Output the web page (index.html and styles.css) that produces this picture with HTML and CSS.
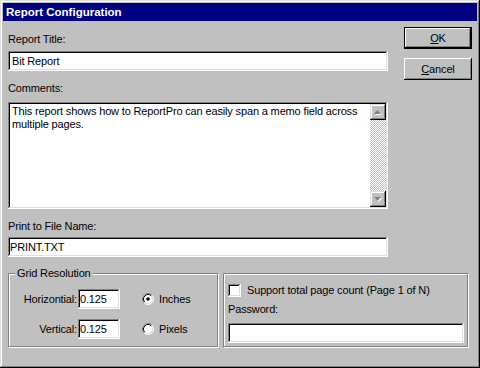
FILE: index.html
```html
<!DOCTYPE html>
<html lang="en">
<head>
    <meta charset="UTF-8">
    <meta name="viewport" content="width=device-width, initial-scale=1.0">
    <title>Report Configuration</title>
    <link rel="stylesheet" href="styles.css">
</head>
<body>
    <div class="dialog">
        <div class="titlebar">Report Configuration</div>

        <div class="dialog-body">
            <!-- Main fields -->
            <div class="main">
                <label class="field-label label-first" for="title">Report Title:</label>
                <input class="field field-title" id="title" type="text" value="Bit Report">

                <label class="field-label label-gap label-comments">Comments:</label>
                <div class="memo">
                    <div class="memo-text">This report shows how to ReportPro can easily span a memo field across multiple pages.</div>
                    <div class="scrollbar">
                        <span class="scroll-btn">
                            <svg width="16" height="16" viewBox="0 0 16 16">
                                <path d="M5 11h7l-3.5-4z" fill="#fff"/>
                                <path d="M4 10h7l-3.5-4z" fill="#808080"/>
                            </svg>
                        </span>
                        <span class="scroll-track"></span>
                        <span class="scroll-btn">
                            <svg width="16" height="16" viewBox="0 0 16 16">
                                <path d="M5 7h7l-3.5 4z" fill="#fff"/>
                                <path d="M4 6h7l-3.5 4z" fill="#808080"/>
                            </svg>
                        </span>
                    </div>
                </div>

                <label class="field-label label-gap label-file" for="file">Print to File Name:</label>
                <input class="field field-file" id="file" type="text" value="PRINT.TXT">
            </div>

            <!-- Dialog buttons -->
            <div class="buttons">
                <button class="btn btn-default"><u>O</u>K</button>
                <button class="btn"><u>C</u>ancel</button>
            </div>

            <!-- Bottom groups -->
            <div class="groups">
                <fieldset class="group group-grid">
                    <legend>Grid Resolution</legend>
                    <div class="grid-rows">
                        <span class="row-label">Horizontial:</span>
                        <input class="field field-small" type="text" value="0.125">
                        <span class="radio">
                            <svg width="12" height="12" viewBox="0 0 12 12">
                                <circle cx="6" cy="6" r="5" fill="#fff"/>
                                <path d="M2.11 9.89A5.5 5.5 0 0 1 9.89 2.11" fill="none" stroke="#808080"/>
                                <path d="M9.89 2.11A5.5 5.5 0 0 1 2.11 9.89" fill="none" stroke="#fff"/>
                                <path d="M2.82 9.18A4.5 4.5 0 0 1 9.18 2.82" fill="none" stroke="#000"/>
                                <path d="M9.18 2.82A4.5 4.5 0 0 1 2.82 9.18" fill="none" stroke="#dfdfdf"/>
                                <circle cx="6" cy="6" r="1.8" fill="#000"/>
                            </svg>
                            Inches
                        </span>

                        <span class="row-label">Vertical:</span>
                        <input class="field field-small" type="text" value="0.125">
                        <span class="radio">
                            <svg width="12" height="12" viewBox="0 0 12 12">
                                <circle cx="6" cy="6" r="5" fill="#fff"/>
                                <path d="M2.11 9.89A5.5 5.5 0 0 1 9.89 2.11" fill="none" stroke="#808080"/>
                                <path d="M9.89 2.11A5.5 5.5 0 0 1 2.11 9.89" fill="none" stroke="#fff"/>
                                <path d="M2.82 9.18A4.5 4.5 0 0 1 9.18 2.82" fill="none" stroke="#000"/>
                                <path d="M9.18 2.82A4.5 4.5 0 0 1 2.82 9.18" fill="none" stroke="#dfdfdf"/>
                            </svg>
                            Pixels
                        </span>
                    </div>
                </fieldset>

                <fieldset class="group group-options">
                    <div class="check-row"><span class="checkbox"></span>Support total page count (Page 1 of N)</div>
                    <label class="field-label label-password" for="password">Password:</label>
                    <input class="field field-password" id="password" type="text" value="">
                </fieldset>
            </div>
        </div>
    </div>
</body>
</html>
```

FILE: styles.css
```css
body {
    margin: 0;
    background-color: #c0c0c0;
    font-family: "Liberation Sans", Arial, sans-serif;
    font-size: 11px;
    letter-spacing: -0.15px;
    color: #000;
}

.dialog {
    width: 480px;
    height: 368px;
    box-sizing: border-box;
    padding: 3px;
    background-color: #c0c0c0;
    box-shadow: inset -1px -1px #000, inset 1px 1px #dfdfdf,
                inset -2px -2px #808080, inset 2px 2px #fff;
}

.titlebar {
    height: 18px;
    line-height: 18px;
    padding-left: 3px;
    background-color: #000080;
    color: #fff;
    font-weight: bold;
    font-size: 11.5px;
    letter-spacing: 0;
}

.dialog-body {
    display: grid;
    grid-template-columns: 380px 68px;
    column-gap: 16px;
    padding: 6px 5px 0;
}

/* Labels and sunken fields */
.field-label {
    display: block;
    line-height: 13px;
}

.label-first {
    margin-top: 6px;
    margin-bottom: 5px;
}

.label-gap {
    margin-top: 11px;
}

.label-comments {
    margin-bottom: 7px;
}

.label-file {
    margin-bottom: 4px;
}

.field,
.memo,
.checkbox {
    background-color: #fff;
    box-shadow: inset -1px -1px #fff, inset 1px 1px #808080,
                inset -2px -2px #dfdfdf, inset 2px 2px #000;
}

.field {
    display: block;
    box-sizing: border-box;
    height: 20px;
    margin: 0;
    border: none;
    outline: none;
    padding: 0 2px;
    font: inherit;
    letter-spacing: inherit;
    color: #000;
}

.field-title {
    width: 380px;
    padding-left: 4px;
}

.field-file {
    width: 380px;
}

.field-small {
    width: 42px;
}

.field-password {
    width: 236px;
}

/* Memo with fake scrollbar */
.memo {
    display: flex;
    height: 107px;
    box-sizing: border-box;
    padding: 2px;
}

.memo-text {
    flex: 1;
    padding: 1px 2px;
    line-height: 13px;
}

.scrollbar {
    width: 16px;
    display: flex;
    flex-direction: column;
}

.scroll-btn {
    display: block;
    height: 16px;
    background-color: #c0c0c0;
    box-shadow: inset -1px -1px #000, inset 1px 1px #dfdfdf,
                inset -2px -2px #808080, inset 2px 2px #fff;
}

.scroll-btn svg {
    display: block;
}

.scroll-track {
    flex: 1;
    background: repeating-conic-gradient(#c0c0c0 0% 25%, #fff 0% 50%) 0 0 / 2px 2px;
}

/* Buttons */
.buttons {
    display: flex;
    flex-direction: column;
    gap: 9px;
}

.btn {
    width: 68px;
    height: 22px;
    padding: 0;
    border: none;
    background-color: #c0c0c0;
    font: inherit;
    letter-spacing: inherit;
    color: #000;
    box-shadow: inset -1px -1px #000, inset 1px 1px #fff,
                inset -2px -2px #808080;
}

.btn-default {
    box-shadow: inset 0 0 0 1px #000, inset -2px -2px #000,
                inset 2px 2px #fff, inset -3px -3px #808080;
}

/* Group boxes */
.groups {
    grid-column: 1 / -1;
    display: flex;
    align-items: flex-start;
    gap: 5px;
    margin-top: 10px;
}

.group {
    margin: 0;
    padding: 0;
    min-width: 0;
    box-sizing: border-box;
    border: 1px solid #808080;
    box-shadow: 1px 1px 0 #fff, inset 1px 1px 0 #fff;
}

.group legend {
    margin-left: 6px;
    padding: 0 2px;
    line-height: 13px;
    background-color: #c0c0c0;
}

.group-grid {
    width: 210px;
}

.grid-rows {
    display: grid;
    grid-template-columns: 69px 42px auto;
    row-gap: 10px;
    align-items: center;
    margin: 9px 0 7px;
    line-height: 13px;
}

.row-label {
    text-align: right;
    padding-right: 1px;
}

.radio {
    display: flex;
    align-items: center;
    gap: 5px;
    margin-left: 22px;
}

.radio svg {
    display: block;
}

.group-options {
    width: 245px;
    margin-top: 6px;
    padding: 10px 3px 3px 4px;
}

.check-row {
    display: flex;
    align-items: center;
    gap: 6px;
    height: 13px;
    line-height: 13px;
}

.checkbox {
    display: block;
    width: 13px;
    height: 13px;
}

.label-password {
    margin-top: 6px;
    margin-bottom: 7px;
}
```
